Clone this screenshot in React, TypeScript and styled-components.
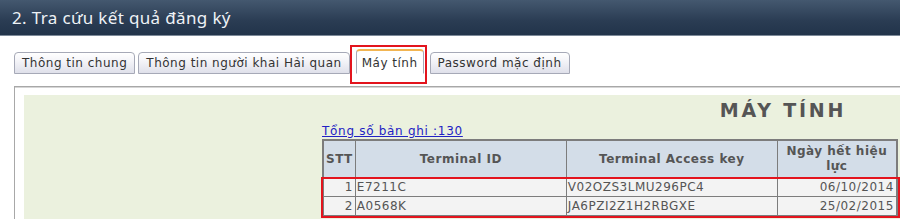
import styled, { createGlobalStyle, css } from 'styled-components';

const GlobalStyle = createGlobalStyle`
  html, body {
    margin: 0;
    padding: 0;
    background: #fff;
    overflow: hidden;
  }
  body {
    font-family: "DejaVu Sans", Verdana, sans-serif;
  }
`;

const Header = styled.div`
  height: 35px;
  display: flex;
  align-items: center;
  padding-left: 12px;
  background: linear-gradient(#44586f, #2a3c53 60%, #22344a);
  border-bottom: 1px solid #7d8a99;
  color: #eef2f6;
  font-family: "Noto Sans", "Open Sans", sans-serif;
  font-size: 17px;
  letter-spacing: 0.35px;
`;

const TabBar = styled.div`
  display: flex;
  align-items: flex-end;
  gap: 3px;
  height: 25px;
  margin: 13px 0 0 14px;
`;

const Tab = styled.div<{ $active?: boolean }>`
  box-sizing: border-box;
  height: 22px;
  padding: 0 7px;
  display: flex;
  align-items: center;
  border: 1px solid #a6a9b7;
  border-radius: 4px 4px 0 0;
  background: linear-gradient(#ffffff, #f4f4f8 40%, #dfe0ea);
  color: #333;
  font-size: 12px;
  letter-spacing: 0.5px;
  white-space: nowrap;

  ${(p) =>
    p.$active &&
    css`
      height: 25px;
      margin: 0 3px 0 3px;
      padding: 1px 5px 0;
      background: #fff;
      border-top: 2px solid #f2b552;
      border-bottom-color: #fff;
    `}
`;

const Marked = styled.div`
  position: relative;
  display: flex;
`;

const RedBox = styled.span<{ $top: number; $left: number; $right: number; $bottom: number }>`
  position: absolute;
  top: ${(p) => p.$top}px;
  left: ${(p) => p.$left}px;
  right: ${(p) => p.$right}px;
  bottom: ${(p) => p.$bottom}px;
  border: 2px solid #e3141d;
  pointer-events: none;
`;

const Panel = styled.div`
  margin: 12px 0 0 14px;
  padding: 8px 0 0 9px;
  border-top: 1px solid #a8a8a8;
  border-left: 1px solid #a8a8a8;
  box-shadow: inset 0 1px 0 #d6d6d6;
`;

const GreenArea = styled.div`
  background: #ebf1de;
  padding: 0 0 20px 298px;
`;

const Content = styled.div`
  width: 922px;
`;

const Title = styled.div`
  text-align: center;
  padding-top: 4px;
  height: 22px;
  color: #555;
  font-size: 19px;
  font-weight: bold;
  letter-spacing: 2.8px;
`;

const Count = styled.a`
  display: block;
  margin-top: 3px;
  color: #2222c4;
  font-size: 12px;
  letter-spacing: 0.7px;
  text-decoration: underline;
  line-height: 15px;
`;

const TableWrap = styled.div`
  position: relative;
  display: inline-block;
`;

const Grid = styled.table`
  border-collapse: collapse;
  border: 2px solid #7c7c7c;
  font-size: 12px;
  letter-spacing: 0.5px;
  color: #555;
`;

const Head = styled.th<{ $w: number }>`
  width: ${(p) => p.$w}px;
  height: 36px;
  padding: 0 2px;
  background: #d3dde8;
  border: 1px solid #7c7c7c;
  font-weight: bold;
  line-height: 15px;
  text-align: center;
`;

const Cell = styled.td<{ $right?: boolean }>`
  height: 18px;
  padding: 0 2px 0 1px;
  background: #f3f3f3;
  border: 1px solid #7c7c7c;
  text-align: ${(p) => (p.$right ? 'right' : 'left')};
  line-height: 15px;
  white-space: nowrap;
`;

const rows = [
  { stt: 1, id: 'E7211C', key: 'V02OZS3LMU296PC4', date: '06/10/2014' },
  { stt: 2, id: 'A0568K', key: 'JA6PZI2Z1H2RBGXE', date: '25/02/2015' },
];

export default function App() {
  return (
    <>
      <GlobalStyle />
      <Header>2. Tra cứu kết quả đăng ký</Header>
      <TabBar>
        <Tab>Thông tin chung</Tab>
        <Tab>Thông tin người khai Hải quan</Tab>
        <Marked>
          <Tab $active>Máy tính</Tab>
          <RedBox $top={-4} $left={-3} $right={0} $bottom={-10} />
        </Marked>
        <Tab>Password mặc định</Tab>
      </TabBar>
      <Panel>
        <GreenArea>
          <Content>
            <Title>MÁY TÍNH</Title>
            <Count href="#">Tổng số bản ghi :130</Count>
            <TableWrap>
              <Grid>
                <thead>
                  <tr>
                    <Head $w={26}>STT</Head>
                    <Head $w={206}>Terminal ID</Head>
                    <Head $w={206}>Terminal Access key</Head>
                    <Head $w={114}>Ngày hết hiệu lực</Head>
                  </tr>
                </thead>
                <tbody>
                  {rows.map((r) => (
                    <tr key={r.stt}>
                      <Cell $right>{r.stt}</Cell>
                      <Cell>{r.id}</Cell>
                      <Cell>{r.key}</Cell>
                      <Cell $right>{r.date}</Cell>
                    </tr>
                  ))}
                </tbody>
              </Grid>
              <RedBox $top={38} $left={-1} $right={-2} $bottom={-1} />
            </TableWrap>
          </Content>
        </GreenArea>
      </Panel>
    </>
  );
}
